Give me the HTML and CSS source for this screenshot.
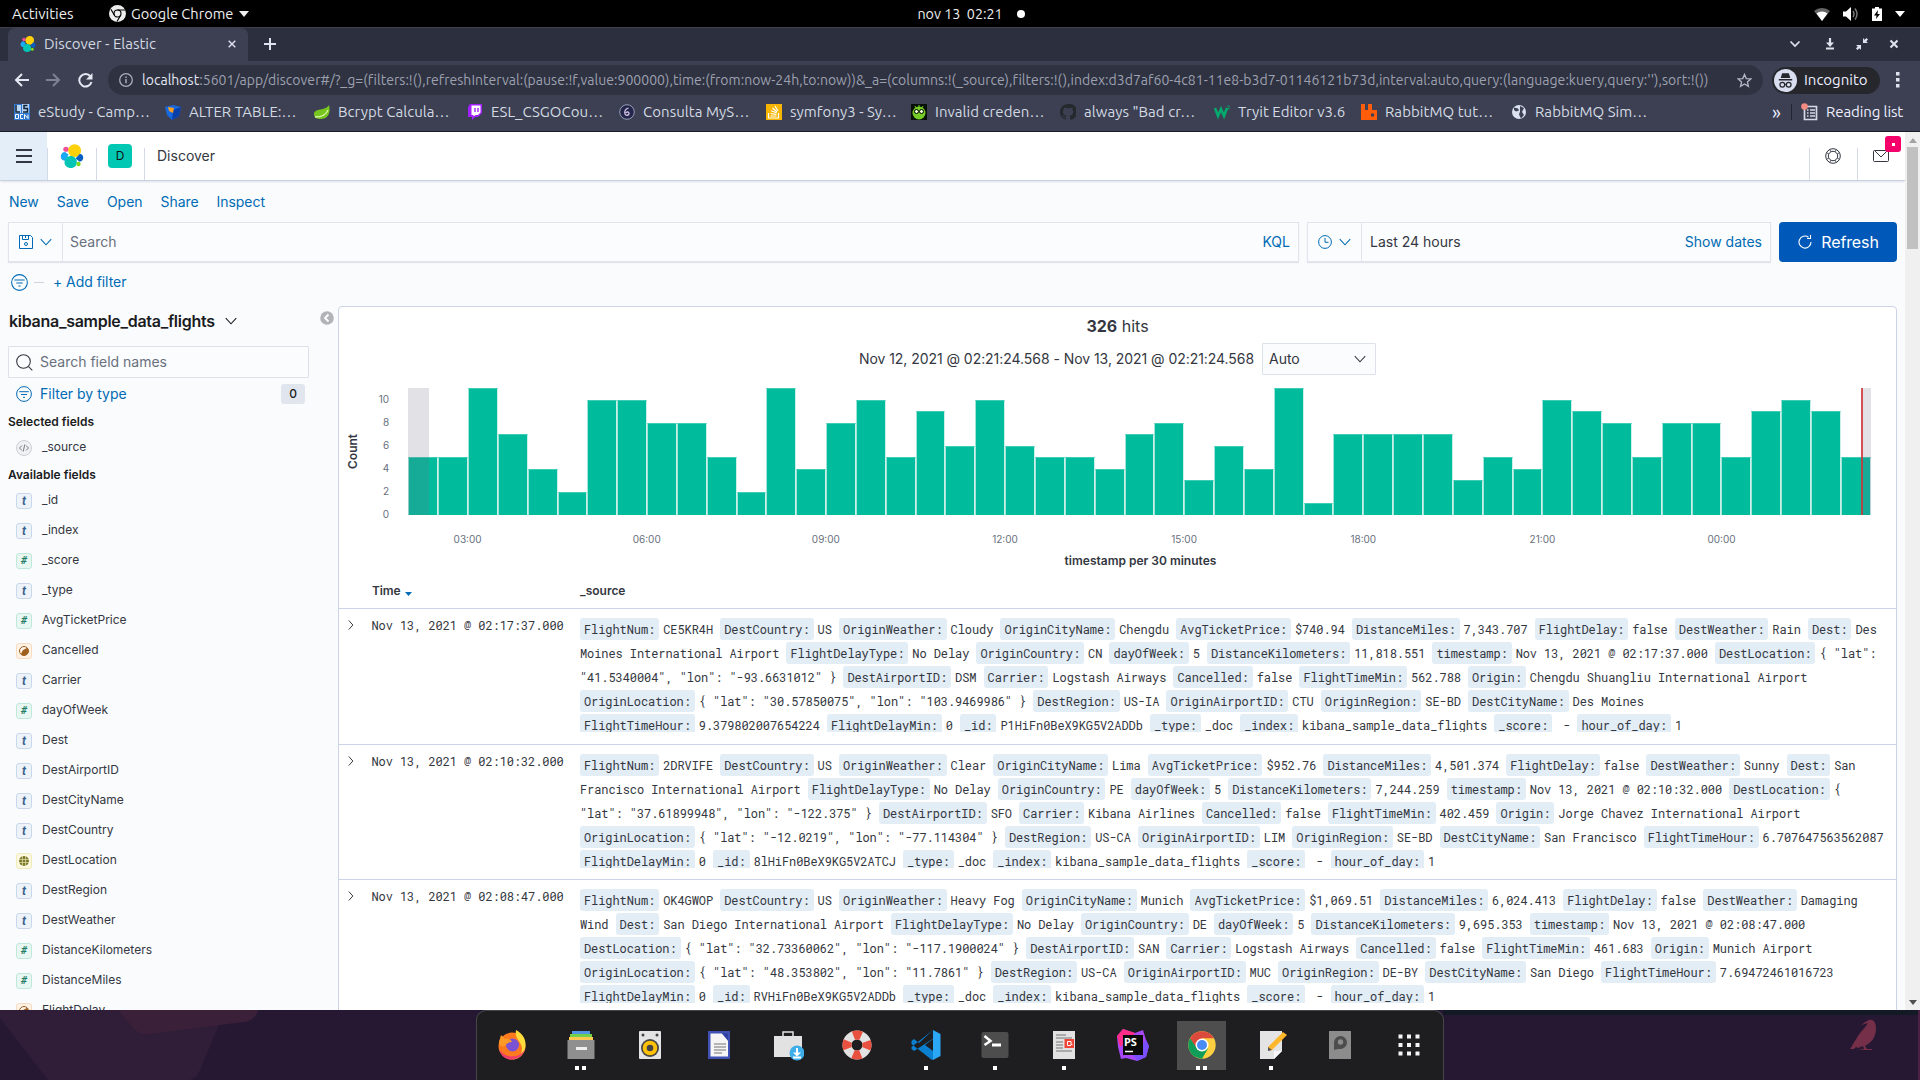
FILE: index.html
```html
<!DOCTYPE html>
<html lang="en">
<head>
<meta charset="utf-8">
<title>Discover - Elastic</title>
<link rel="stylesheet" href="styles.css">
</head>
<body>
<svg class="defs" aria-hidden="true">
  <symbol id="elastic" viewBox="0 0 32 32">
    <ellipse cx="8" cy="7" rx="3.6" ry="3.4" fill="#f04e98"/>
    <ellipse cx="19.5" cy="8.8" rx="8.6" ry="8.6" fill="#fed10a"/>
    <path d="M1 17c0-3.600 2.500-6.300 5.800-6.300l4.500 3.300-3.500 8.500C3.600 22.500 1 20.600 1 17z" fill="#1ba9f5"/>
    <path d="M31 18.300c0 3-2.200 5-4.800 5.400l-5.500-4.500 5.800-6.200c2.700.3 4.500 2.500 4.500 5.300z" fill="#0a5fc4"/>
    <path d="M6 25c0-5 3.500-9 8-9 5 0 8.500 3.600 8.500 8.300 0 4.500-3.500 7.700-8 7.700S6 29 6 25z" fill="#02c5b5"/>
    <ellipse cx="24.700" cy="26.500" rx="2.900" ry="3" fill="#7ddb1d"/>
  </symbol>
  <symbol id="chevd" viewBox="0 0 16 16"><path d="M2 4.800l6 6.400 6-6.400" fill="none" stroke="currentColor" stroke-width="1.200"/></symbol>
  <symbol id="chevr" viewBox="0 0 16 16"><path d="M5 2l5.500 6L5 14" fill="none" stroke="currentColor" stroke-width="1.300"/></symbol>
  <symbol id="filter" viewBox="0 0 16 16"><g fill="none" stroke="currentColor"><circle cx="8" cy="8" r="7.400"/><path d="M3.200 5.700h9.600M5 8.500h6M7 11.300h2"/></g></symbol>
  <symbol id="bool" viewBox="0 0 16 16"><circle cx="8" cy="8" r="4.500" fill="none" stroke="#a05f1e"/><path d="M11.200 4.800a4.500 4.500 0 0 1-6.400 6.400l2-4z" fill="#a05f1e"/></symbol>
</svg>

<header class="topbar">
  <div class="top-left">
    <span class="t-act">Activities</span>
    <svg width="17" height="17" viewBox="0 0 16 16"><circle cx="8" cy="8" r="8" fill="#eee"/><circle cx="8" cy="8" r="3.300" fill="#eee" stroke="#000" stroke-width="1.100"/><path d="M8 4.700h7M5.100 9.700L1.800 4M10.900 9.700L7.600 15.500" stroke="#000" stroke-width="1.100"/></svg>
    <span class="t-app">Google Chrome</span>
    <svg width="10" height="6"><path d="M0 0h10L5 6z" fill="#eee"/></svg>
  </div>
  <div class="top-mid"><span>nov 13&nbsp; 02:21</span><i></i></div>
  <div class="top-right">
    <svg width="16" height="14" viewBox="0 0 16 14"><path d="M0 4a12 12 0 0 1 16 0L8 14z" fill="#666"/><path d="M2.500 6.600a8.500 8.500 0 0 1 11 0L8 14z" fill="#fff"/></svg>
    <svg width="16" height="14" viewBox="0 0 16 14"><path d="M0 4.500h3L8 0v14L3 9.500H0z" fill="#fff"/><path d="M10 4q2 3 0 6M12 1.500q4 5.500 0 11" stroke="#777" stroke-width="1.500" fill="none"/></svg>
    <svg width="10" height="14" viewBox="0 0 10 14"><path d="M3 0h4v1.500h3V14H0V1.500h3z" fill="#fff"/><path d="M6 3L2 8.500h2.500L4 12l4-5H5.500z" fill="#000"/></svg>
    <svg width="10" height="6"><path d="M0 0h10L5 6z" fill="#fff"/></svg>
  </div>
</header>

<div class="tabstrip">
  <div class="tab">
    <svg width="16" height="16"><use href="#elastic"/></svg>
    <span>Discover - Elastic</span>
    <svg class="tab-x" width="8" height="8" viewBox="0 0 8 8"><path d="M.7.7l6.600 6.600M7.300.7L.7 7.300" stroke="#dde" stroke-width="1.500"/></svg>
  </div>
  <svg class="plus" width="12" height="12"><path d="M6 0v12M0 6h12" stroke="#dfe3ee" stroke-width="2"/></svg>
  <div class="winbtns">
    <svg width="12" height="12" viewBox="0 0 12 12"><path d="M1.500 3.500L6 8l4.500-4.500" fill="none" stroke="#dfe3ee" stroke-width="1.700"/></svg>
    <svg width="12" height="12" viewBox="0 0 12 12"><path d="M6 0v6" stroke="#dfe3ee" stroke-width="2.200"/><path d="M2 4.500h8L6 9zM2 9.500h8V11.500H2z" fill="#dfe3ee"/></svg>
    <svg width="12" height="12" viewBox="0 0 12 12"><path d="M7 0v5h5L10.300 3.500 12 1.500 10.500 0 8.500 1.700zM0 7h5v5L3.500 10.300 1.500 12 0 10.500l1.700-2z" fill="#dfe3ee"/></svg>
    <svg width="12" height="12" viewBox="0 0 12 12"><path d="M2.500 2.500l7 7M9.500 2.500l-7 7" stroke="#dfe3ee" stroke-width="2.100"/></svg>
  </div>
</div>

<div class="toolbar">
  <svg width="15" height="14" viewBox="0 0 15 14"><path d="M15 7H2M8 1L2 7l6 6" fill="none" stroke="#e4e8f2" stroke-width="2"/></svg>
  <svg width="15" height="14" viewBox="0 0 15 14"><path d="M0 7h13M7 1l6 6-6 6" fill="none" stroke="#7d8294" stroke-width="2"/></svg>
  <svg width="15" height="15" viewBox="0 0 15 15"><path d="M12.500 3.600A6.200 6.200 0 1 0 13.500 9" fill="none" stroke="#e4e8f2" stroke-width="2"/><path d="M14.500 0v6.500H8z" fill="#e4e8f2"/></svg>
  <div class="omni">
    <svg width="14" height="14" viewBox="0 0 14 14"><circle cx="7" cy="7" r="6.300" fill="none" stroke="#a9adba" stroke-width="1.300"/><path d="M7 6v4.300M7 3.500V5" stroke="#a9adba" stroke-width="1.500"/></svg>
    <span class="url"><b>localhost</b>:5601/app/discover#/?_g=(filters:!(),refreshInterval:(pause:!f,value:900000),time:(from:now-24h,to:now))&amp;_a=(columns:!(_source),filters:!(),index:d3d7af60-4c81-11e8-b3d7-01146121b73d,interval:auto,query:(language:kuery,query:''),sort:!())</span>
    <svg class="star" width="15" height="15" viewBox="0 0 16 16"><path d="M8 1.500l1.900 4.400 4.800.4-3.600 3.200 1.100 4.700L8 11.700l-4.200 2.500 1.100-4.700L1.300 6.300l4.800-.4z" fill="none" stroke="#b4b8c6" stroke-width="1.400"/></svg>
  </div>
  <div class="incog">
    <svg width="23" height="23" viewBox="0 0 24 24"><circle cx="12" cy="12" r="12" fill="#d9def0"/><path d="M8.500 4.500h7l1.500 5H7zM5 10.500h14V12H5z" fill="#25272c"/><circle cx="8.700" cy="16.500" r="2.500" fill="none" stroke="#25272c" stroke-width="1.300"/><circle cx="15.300" cy="16.500" r="2.500" fill="none" stroke="#25272c" stroke-width="1.300"/><path d="M11 16h2" stroke="#25272c"/></svg>
    <span>Incognito</span>
  </div>
  <svg class="dots" width="4" height="16"><path d="M0 0h3.500v3.500H0zM0 6h3.500v3.500H0zM0 12h3.500v3.500H0z" fill="#dfe3ee"/></svg>
</div>

<div class="bookmarks">
  <div class="bm"><svg viewBox="0 0 16 16"><path d="M0 0h16v16H0z" fill="#2f78d0"/><path d="M1 1h6v8H1zM8 0h7v9H8z" fill="#b8d5f7"/><path d="M2 1v7h4M13.500 1.500H10v3h3.500v3.500H9" stroke="#123" stroke-width="1.500" fill="none"/><path d="M1.500 10.500v4h3v-4zM9 10.500H6.500v4H9M10.500 15v-4.500l3.500 4v-4" stroke="#fff" fill="none"/></svg><span>eStudy - Camp…</span></div>
  <div class="bm"><svg viewBox="0 0 16 16"><path d="M0 3l8-2 8 2-2 9-7 4-5-5z" fill="#1769e0"/><path d="M8 6l8-3-2 9-7 4z" fill="#0a3fa8"/><path d="M3 3l6 1-1 5-4-2z" fill="#ff9d1c"/></svg><span>ALTER TABLE:…</span></div>
  <div class="bm"><svg viewBox="0 0 16 16"><path d="M15 1c2 8-1 14-8 14-4 0-7-1-7-5 0-6 12-3 15-9z" fill="#77c51f"/><path d="M1 13c6 0 11-2 13-7" stroke="#d9f5a5" stroke-width="1.300" fill="none"/></svg><span>Bcrypt Calcula…</span></div>
  <div class="bm"><svg viewBox="0 0 16 16"><path d="M3 0h12v9l-4 4H8l-3 3v-3H1V3z" fill="#a020f8"/><path d="M4.500 1.500h9v7L11 11H8.500L6.500 12.500V11h-2z" fill="#fff"/><path d="M8 4v4M11 4v4" stroke="#a020f8" stroke-width="1.400"/></svg><span>ESL_CSGOCou…</span></div>
  <div class="bm"><svg viewBox="0 0 16 16"><circle cx="8" cy="8" r="7.300" fill="#23264a" stroke="#999db4"/><path d="M9.500 4C6 5 5.500 8 6 10c1 2 4 1.500 4-.5S8 7.500 7 9" fill="none" stroke="#dce" stroke-width="1.300"/></svg><span>Consulta MyS…</span></div>
  <div class="bm"><svg viewBox="0 0 16 16"><path d="M0 0h16v16H0z" fill="#f7b500"/><path d="M2.500 9v5h10V9M4.500 12h6M4.500 9.500l6 .8M5 6.700l5.700 2M6.500 4l4.500 3.800M9 2l3 5" stroke="#fff" fill="none" stroke-width="1.200"/></svg><span>symfony3 - Sy…</span></div>
  <div class="bm"><svg viewBox="0 0 16 16"><path d="M0 0h16v16H0z" fill="#071004"/><circle cx="8" cy="9" r="6.500" fill="#76cc27"/><path d="M4 2l1 2M8 1v3M12 2l-1 2" stroke="#76cc27"/><circle cx="5.500" cy="7.500" r="2" fill="#eaffd0" stroke="#000"/><circle cx="10.500" cy="7.500" r="2" fill="#eaffd0" stroke="#000"/></svg><span>Invalid creden…</span></div>
  <div class="bm"><svg viewBox="0 0 16 16"><path d="M8 0C3.600 0 0 3.600 0 8c0 3.500 2.300 6.500 5.500 7.600.4.100.5-.2.500-.4v-1.400c-2.200.5-2.700-1-2.700-1-.8-1.400-1.500-1.600-.9-1.600.9.100 1.600 1 1.600 1 .6 1 1.700.9 2.100.7 0-.6.300-1 .5-1.200-1.800-.2-3.600-.9-3.600-4 0-.9.300-1.600.8-2.100 0-.3-.4-1.100.1-2.200l2.200.8a7.600 7.600 0 0 1 4 0l2.200-.8c.4 1.100.1 1.900.1 2.200.5.600.8 1.200.8 2.100 0 3.100-1.900 3.800-3.700 4 .3.300.6.700.6 1.500v2.200c0 .2.100.5.600.4A8 8 0 0 0 8 0z" fill="#25292e"/></svg><span>always "Bad cr…</span></div>
  <div class="bm"><svg viewBox="0 0 16 16"><path d="M1 4l3 8 3-7 3 7 3-8" fill="none" stroke="#04aa6d" stroke-width="2.600"/><path d="M13 2h2.500l-1 1.500 1 1.500H13" stroke="#04aa6d" fill="none" stroke-width=".8"/></svg><span>Tryit Editor v3.6</span></div>
  <div class="bm"><svg viewBox="0 0 16 16"><path d="M0 0h4v6h3V0h4v6h5v10H0z" fill="#ff5d0a"/><circle cx="11.500" cy="11" r="1.800" fill="#3c4052"/></svg><span>RabbitMQ tut…</span></div>
  <div class="bm"><svg viewBox="0 0 16 16"><circle cx="8" cy="8" r="7" fill="#dce1f0"/><path d="M3 3.500l4 1 1 2-3 1-2-1.500zM9 2l4 2-2 4 2 3-3 3.500-2-4 1-3z" fill="#3c4052"/></svg><span>RabbitMQ Sim…</span></div>
  <div class="bm-end">
    <b>»</b><i></i>
    <svg width="18" height="18" viewBox="0 0 18 18"><path d="M3.500 4v12.500h12V3.500H6" fill="none" stroke="#d5d9e6" stroke-width="1.700"/><path d="M6 7h1.500M9 7h5M6 10h1.500M9 10h5M6 13h1.500M9 13h5" stroke="#d5d9e6" stroke-width="1.500"/><circle cx="3.500" cy="3.500" r="3.300" fill="#f28b82"/></svg>
    <span>Reading list</span>
  </div>
</div>

<div class="viewport">
<div class="page">
  <div class="khead">
    <div class="k-menu"><svg width="16" height="14"><path d="M0 1h16M0 7h16M0 13h16" stroke="#343741" stroke-width="2"/></svg></div>
    <div class="k-cell k-logo"><svg width="24" height="24"><use href="#elastic"/></svg></div>
    <div class="k-cell"><span class="space">D</span></div>
    <div class="k-crumb">Discover</div>
    <div class="k-cell k-help"><svg width="16" height="16" viewBox="0 0 16 16" fill="none" stroke="#343741"><circle cx="8" cy="8" r="7.300"/><circle cx="8" cy="8" r="4.700"/><path d="M4.800 1.600l1.200 2.300M11.200 1.600L10 3.900M4.800 14.400l1.200-2.300M11.200 14.400L10 12.100M1.600 4.800L3.900 6M1.600 11.200L3.900 10M14.400 4.800L12.100 6M14.400 11.200L12.100 10" stroke-width=".8"/></svg></div>
    <div class="k-cell k-mail"><svg width="16" height="12" viewBox="0 0 16 12" fill="none" stroke="#343741"><rect x=".5" y=".5" width="15" height="11" rx="1"/><path d="M2 1l6 6 6-6"/></svg><em><u></u></em></div>
  </div>
  <nav class="kmenu"><a>New</a><a>Save</a><a>Open</a><a>Share</a><a>Inspect</a></nav>
  <div class="qbar">
    <div class="box q-search">
      <div class="q-btn"><svg width="14" height="14" viewBox="0 0 14 14" fill="none" stroke="currentColor"><path d="M.5.5h11l2 2v11H.5zM3.500.5v4h6v-4M6.500 1v2"/><circle cx="7" cy="9" r="1.500"/></svg><svg width="14" height="14"><use href="#chevd"/></svg></div>
      <span class="ph">Search</span><a>KQL</a>
    </div>
    <div class="box q-time">
      <div class="q-btn"><svg width="14" height="14" viewBox="0 0 14 14" fill="none" stroke="currentColor"><circle cx="7" cy="7" r="6.400"/><path d="M7 3v4.300h3.500"/></svg><svg width="14" height="14"><use href="#chevd"/></svg></div>
      <span>Last 24 hours</span><a>Show dates</a>
    </div>
    <div class="refresh"><svg width="14" height="14" viewBox="0 0 14 14" fill="none" stroke="#fff" stroke-width="1.100"><path d="M10.500 2.200A6 6 0 1 0 13 7M9 3.500h3.500V0"/></svg><span>Refresh</span></div>
  </div>
  <div class="frow"><svg width="17" height="17"><use href="#filter"/></svg><i></i><a>+ Add filter</a></div>

  <div class="main">
    <aside class="side">
      <div class="s-title"><b>kibana_sample_data_flights</b><svg width="14" height="14"><use href="#chevd"/></svg>
        <svg class="s-col" width="14" height="14" viewBox="0 0 14 14"><circle cx="7" cy="7" r="6.800" fill="#b2b3b7"/><path d="M8.500 3.500L5 7l3.500 3.500" fill="none" stroke="#fff" stroke-width="1.800"/></svg></div>
      <div class="s-search"><svg width="17" height="17" viewBox="0 0 17 17" fill="none" stroke="#343741" stroke-width="1.100"><circle cx="7.500" cy="7.500" r="6.800"/><path d="M12.300 12.300l4 4"/></svg><span>Search field names</span></div>
      <div class="s-type"><svg width="16" height="16"><use href="#filter"/></svg><a>Filter by type</a><em>0</em></div>
      <h4>Selected fields</h4>
      <div class="f sel"><i class="src"><svg width="16" height="16" viewBox="0 0 16 16"><path d="M6 5.500L3.500 8 6 10.500M10 5.500L12.500 8 10 10.500M8.800 4.500l-1.600 7" fill="none" stroke="#777a80"/></svg></i>_source</div>
      <h4 class="av">Available fields</h4>
      <div class="f"><i class="t">t</i>_id</div>
      <div class="f"><i class="t">t</i>_index</div>
      <div class="f"><i class="n">#</i>_score</div>
      <div class="f"><i class="t">t</i>_type</div>
      <div class="f"><i class="n">#</i>AvgTicketPrice</div>
      <div class="f"><i class="b"><svg width="16" height="16"><use href="#bool"/></svg></i>Cancelled</div>
      <div class="f"><i class="t">t</i>Carrier</div>
      <div class="f"><i class="n">#</i>dayOfWeek</div>
      <div class="f"><i class="t">t</i>Dest</div>
      <div class="f"><i class="t">t</i>DestAirportID</div>
      <div class="f"><i class="t">t</i>DestCityName</div>
      <div class="f"><i class="t">t</i>DestCountry</div>
      <div class="f"><i class="g"><svg width="16" height="16" viewBox="0 0 16 16"><circle cx="8" cy="8" r="5" fill="#7e7a2c"/><path d="M3 6.500h10M3 9.500h10M6.500 3v10M9.500 3v10" stroke="#f3f0c8" stroke-width=".6"/></svg></i>DestLocation</div>
      <div class="f"><i class="t">t</i>DestRegion</div>
      <div class="f"><i class="t">t</i>DestWeather</div>
      <div class="f"><i class="n">#</i>DistanceKilometers</div>
      <div class="f"><i class="n">#</i>DistanceMiles</div>
      <div class="f"><i class="b"><svg width="16" height="16"><use href="#bool"/></svg></i>FlightDelay</div>
    </aside>

    <section class="panel">
      <div class="hits"><b>326</b> hits</div>
      <div class="range"><span>Nov 12, 2021 @ 02:21:24.568 - Nov 13, 2021 @ 02:21:24.568</span><div class="select">Auto<svg width="14" height="14"><use href="#chevd"/></svg></div></div>
      <div class="chart">
        <div class="ytitle">Count</div>
        <div class="yaxis"><span>10</span><span>8</span><span>6</span><span>4</span><span>2</span><span>0</span></div>
        <div class="plot">
          <i style="--v:5"></i><i style="--v:5"></i><i style="--v:11"></i><i style="--v:7"></i><i style="--v:4"></i><i style="--v:2"></i><i style="--v:10"></i><i style="--v:10"></i><i style="--v:8"></i><i style="--v:8"></i><i style="--v:5"></i><i style="--v:2"></i><i style="--v:11"></i><i style="--v:4"></i><i style="--v:8"></i><i style="--v:10"></i><i style="--v:5"></i><i style="--v:9"></i><i style="--v:6"></i><i style="--v:10"></i><i style="--v:6"></i><i style="--v:5"></i><i style="--v:5"></i><i style="--v:4"></i><i style="--v:7"></i><i style="--v:8"></i><i style="--v:3"></i><i style="--v:6"></i><i style="--v:4"></i><i style="--v:11"></i><i style="--v:1"></i><i style="--v:7"></i><i style="--v:7"></i><i style="--v:7"></i><i style="--v:7"></i><i style="--v:3"></i><i style="--v:5"></i><i style="--v:4"></i><i style="--v:10"></i><i style="--v:9"></i><i style="--v:8"></i><i style="--v:5"></i><i style="--v:8"></i><i style="--v:8"></i><i style="--v:5"></i><i style="--v:9"></i><i style="--v:10"></i><i style="--v:9"></i><i style="--v:5"></i>
          <s class="shade-l"></s><s class="shade-r"></s>
        </div>
      </div>
      <div class="xaxis"><span>03:00</span><span>06:00</span><span>09:00</span><span>12:00</span><span>15:00</span><span>18:00</span><span>21:00</span><span>00:00</span></div>
      <div class="xtitle">timestamp per 30 minutes</div>
      <div class="thead"><span class="c-time">Time <svg width="7" height="4"><path d="M0 0h7L3.500 4z" fill="#006bb4"/></svg></span><span>_source</span></div>
      <div class="row"><svg class="exp" width="12" height="12"><use href="#chevr"/></svg><time>Nov 13, 2021 @ 02:17:37.000</time>
        <p><q>FlightNum:</q>CE5KR4H <q>DestCountry:</q>US <q>OriginWeather:</q>Cloudy <q>OriginCityName:</q>Chengdu <q>AvgTicketPrice:</q>$740.94 <q>DistanceMiles:</q>7,343.707 <q>FlightDelay:</q>false <q>DestWeather:</q>Rain <q>Dest:</q>Des<br>Moines International Airport <q>FlightDelayType:</q>No Delay <q>OriginCountry:</q>CN <q>dayOfWeek:</q>5 <q>DistanceKilometers:</q>11,818.551 <q>timestamp:</q>Nov 13, 2021 @ 02:17:37.000 <q>DestLocation:</q>{ "lat":<br>"41.5340004", "lon": "-93.6631012" } <q>DestAirportID:</q>DSM <q>Carrier:</q>Logstash Airways <q>Cancelled:</q>false <q>FlightTimeMin:</q>562.788 <q>Origin:</q>Chengdu Shuangliu International Airport<br><q>OriginLocation:</q>{ "lat": "30.57850075", "lon": "103.9469986" } <q>DestRegion:</q>US-IA <q>OriginAirportID:</q>CTU <q>OriginRegion:</q>SE-BD <q>DestCityName:</q>Des Moines<br><q>FlightTimeHour:</q>9.379802007654224 <q>FlightDelayMin:</q>0 <q>_id:</q>P1HiFn0BeX9KG5V2ADDb <q>_type:</q>_doc <q>_index:</q>kibana_sample_data_flights <q>_score:</q>&nbsp;- <q>hour_of_day:</q>1</p></div>
      <div class="row"><svg class="exp" width="12" height="12"><use href="#chevr"/></svg><time>Nov 13, 2021 @ 02:10:32.000</time>
        <p><q>FlightNum:</q>2DRVIFE <q>DestCountry:</q>US <q>OriginWeather:</q>Clear <q>OriginCityName:</q>Lima <q>AvgTicketPrice:</q>$952.76 <q>DistanceMiles:</q>4,501.374 <q>FlightDelay:</q>false <q>DestWeather:</q>Sunny <q>Dest:</q>San<br>Francisco International Airport <q>FlightDelayType:</q>No Delay <q>OriginCountry:</q>PE <q>dayOfWeek:</q>5 <q>DistanceKilometers:</q>7,244.259 <q>timestamp:</q>Nov 13, 2021 @ 02:10:32.000 <q>DestLocation:</q>{<br>"lat": "37.61899948", "lon": "-122.375" } <q>DestAirportID:</q>SFO <q>Carrier:</q>Kibana Airlines <q>Cancelled:</q>false <q>FlightTimeMin:</q>402.459 <q>Origin:</q>Jorge Chavez International Airport<br><q>OriginLocation:</q>{ "lat": "-12.0219", "lon": "-77.114304" } <q>DestRegion:</q>US-CA <q>OriginAirportID:</q>LIM <q>OriginRegion:</q>SE-BD <q>DestCityName:</q>San Francisco <q>FlightTimeHour:</q>6.707647563562087<br><q>FlightDelayMin:</q>0 <q>_id:</q>8lHiFn0BeX9KG5V2ATCJ <q>_type:</q>_doc <q>_index:</q>kibana_sample_data_flights <q>_score:</q>&nbsp;- <q>hour_of_day:</q>1</p></div>
      <div class="row"><svg class="exp" width="12" height="12"><use href="#chevr"/></svg><time>Nov 13, 2021 @ 02:08:47.000</time>
        <p><q>FlightNum:</q>OK4GWOP <q>DestCountry:</q>US <q>OriginWeather:</q>Heavy Fog <q>OriginCityName:</q>Munich <q>AvgTicketPrice:</q>$1,069.51 <q>DistanceMiles:</q>6,024.413 <q>FlightDelay:</q>false <q>DestWeather:</q>Damaging<br>Wind <q>Dest:</q>San Diego International Airport <q>FlightDelayType:</q>No Delay <q>OriginCountry:</q>DE <q>dayOfWeek:</q>5 <q>DistanceKilometers:</q>9,695.353 <q>timestamp:</q>Nov 13, 2021 @ 02:08:47.000<br><q>DestLocation:</q>{ "lat": "32.73360062", "lon": "-117.1900024" } <q>DestAirportID:</q>SAN <q>Carrier:</q>Logstash Airways <q>Cancelled:</q>false <q>FlightTimeMin:</q>461.683 <q>Origin:</q>Munich Airport<br><q>OriginLocation:</q>{ "lat": "48.353802", "lon": "11.7861" } <q>DestRegion:</q>US-CA <q>OriginAirportID:</q>MUC <q>OriginRegion:</q>DE-BY <q>DestCityName:</q>San Diego <q>FlightTimeHour:</q>7.69472461016723<br><q>FlightDelayMin:</q>0 <q>_id:</q>RVHiFn0BeX9KG5V2ADDb <q>_type:</q>_doc <q>_index:</q>kibana_sample_data_flights <q>_score:</q>&nbsp;- <q>hour_of_day:</q>1</p></div>
    </section>
  </div>
</div>
<div class="scroll">
  <svg width="8" height="5"><path d="M0 5h8L4 0z" fill="#a3a3a3"/></svg>
  <i></i>
  <svg width="8" height="5"><path d="M0 0h8L4 5z" fill="#505050"/></svg>
</div>
</div>

<footer class="desk">
  <svg class="wall" width="1920" height="70" viewBox="0 0 1920 70">
    <path d="M0 0h225L200 60q-4 10-12 10H48L0 8z" fill="#301d37"/>
    <path d="M118 0h140q-2 10-14 12l-96 12q-8 1-14-5z" fill="#3a2038"/>
    <path d="M1443 0h477v5h-477z" fill="#131a26"/>
    <path d="M1918 0h2v70h-2z" fill="#4a2045"/>
    <path d="M1850 39l8-13c3-5 8-9 10-13l-7 2c3-2 5-4 8-5 4-1 7 2 7 8 0 9-4 14-11 18l2 3h5v1h-14l6-1-1-3-5 2-2-1-2 2z" fill="#752f49"/>
  </svg>
  <div class="dock">
    <div class="d"><svg viewBox="0 0 32 32"><circle cx="16" cy="17" r="13.500" fill="#ff7a1f"/><path d="M20 1c7 4 10 9 9.500 16-1 9-7 13-13 13.500 8-3 11-8 9-14-2-5-7-8-5.500-15.500z" fill="#ffdc3c"/><path d="M3 20c2 9 10 12 16 10 5-1 9-5 10-10-4 7-10 8-16 7-5-1-8-4-10-7z" fill="#f0406a"/><circle cx="16.500" cy="16" r="6.500" fill="#7b52d3"/><path d="M5 6l4 4c3-1 6 0 7 3-3 0-5 1-7 4-4 1-6-1-6-4z" fill="#ff9a26"/></svg></div>
    <div class="d"><svg viewBox="0 0 32 32"><path d="M7 2h18v4H7z" fill="#5294e2"/><path d="M5 5h22v4H5z" fill="#72d14b"/><path d="M4 8h24v4H4z" fill="#ffc850"/><path d="M2.500 11h27v19h-27z" fill="#8f8f8f"/><path d="M11 18h11v3H11z" fill="#eee"/></svg><s></s><s></s></div>
    <div class="d"><svg viewBox="0 0 32 32"><rect x="5" y="2" width="22" height="28" rx="1" fill="#e4e4e4"/><circle cx="9" cy="6" r="1.500" fill="#444"/><circle cx="23" cy="6" r="1.500" fill="#444"/><circle cx="16" cy="19" r="9" fill="#444"/><circle cx="16" cy="19" r="5.300" fill="#444" stroke="#ffc107" stroke-width="4"/></svg></div>
    <div class="d"><svg viewBox="0 0 32 32"><path d="M5 2h22v28H5z" fill="#3f51b5"/><path d="M7.500 4.500H19l6 7v16H7.500z" fill="#f5f5f5"/><path d="M19 4.500h6v7z" fill="#3040a0"/><path d="M11 15h12M11 18h12M11 21h12M11 24h8" stroke="#777" stroke-width="1.200"/></svg></div>
    <div class="d"><svg viewBox="0 0 32 32"><path d="M11 7V3h10v4" fill="none" stroke="#e4e4e4" stroke-width="1.500"/><path d="M2 7h28v21H2z" fill="#e2e2e2"/><circle cx="25" cy="24" r="7.500" fill="#3daee9"/><path d="M25 19v6M21 28.500h8" stroke="#fff" stroke-width="2"/><path d="M21 23.500h8l-4 4z" fill="#fff"/></svg></div>
    <div class="d"><svg viewBox="0 0 32 32"><circle cx="16" cy="16" r="10" fill="none" stroke="#e2e2e2" stroke-width="9"/><circle cx="16" cy="16" r="10" fill="none" stroke="#e8503f" stroke-width="9" stroke-dasharray="7.854" stroke-dashoffset="3.927"/></svg></div>
    <div class="d"><svg viewBox="0 0 32 32"><path d="M23 1L9 14 4 10 1.500 12v3L22 31l2-1V9L4 22l-2.500-2v-2z" fill="#0b7fd0"/><path d="M23 1l7.500 4v22L23 31z" fill="#2aa8f5"/><path d="M23 10L15 16l8 6z" fill="#1e1e20"/></svg><s></s></div>
    <div class="d"><svg viewBox="0 0 32 32"><rect x="2.500" y="3" width="27" height="26" rx="2" fill="#4d4d4d"/><path d="M5.500 7l6 5-6 4" fill="none" stroke="#fff" stroke-width="2.500"/><path d="M13 16h9" stroke="#fff" stroke-width="3"/></svg><s></s></div>
    <div class="d"><svg viewBox="0 0 32 32"><path d="M5 2h22v28H5z" fill="#e2e2e2"/><path d="M8 6h10M8 9h16M8 13h7M8 16h7M8 19h7M8 22h16" stroke="#999" stroke-width="1.500"/><path d="M16.500 10H26v9h-9.500z" fill="#f04438"/><path d="M23 16.500h-3.500v-4H23v3h1.500" stroke="#fff" fill="none"/></svg><s></s></div>
    <div class="d ps"><svg viewBox="0 0 32 32"><path d="M0 7l6-7 12 4 8-3 3 10 3 6-3 11-9 4-11-3-5 1-3-12z" fill="#a847f5"/><path d="M0 7l6-7 12 4-5 6-10 8z" fill="#ff2d87"/><path d="M29 11l3 6-3 11-9 4-4-6z" fill="#7a4fff"/><path d="M6 6h20v20H6z" fill="#0a0a0a"/><path d="M8 22.500h8" stroke="#fff" stroke-width="1.500"/></svg><b>PS</b></div>
    <div class="d on"><svg viewBox="0 0 32 32"><circle cx="16" cy="16" r="13.700" fill="#fdd041"/><path d="M4.100 9.200A13.700 13.700 0 0 1 27.900 9.300H16L9.800 19.500z" fill="#dc4a3c"/><path d="M4.100 9.200A13.700 13.700 0 0 0 16 29.700L22 19.500 12 21z" fill="#109d58"/><circle cx="16" cy="16" r="6.500" fill="#fff"/><circle cx="16" cy="16" r="5" fill="#4a8cf5"/></svg><s></s><s></s></div>
    <div class="d"><svg viewBox="0 0 32 32"><path d="M5 2h22v20l-8 8H5z" fill="#e4e4e4"/><path d="M19 30v-8h8z" fill="#fafafa"/><path d="M13 18L28 3l4 3-15 15-4 1z" fill="#fdb72b"/><path d="M13 18l4 3-4 1z" fill="#555"/></svg><s></s></div>
    <div class="d"><svg viewBox="0 0 32 32"><path d="M5 2h22v28H5z" fill="#8c8c8c"/><path d="M10 21v-8a6.500 6.500 0 1 1 7 7h-3z" fill="#4d4d4d"/><circle cx="16.500" cy="13" r="2.700" fill="#8c8c8c"/></svg></div>
    <div class="d"><svg viewBox="0 0 32 32"><path d="M5.500 5.500h4v4h-4zM14 5.500h4v4h-4zM22.500 5.500h4v4h-4zM5.500 14h4v4h-4zM14 14h4v4h-4zM22.500 14h4v4h-4zM5.500 22.500h4v4h-4zM14 22.500h4v4h-4zM22.500 22.500h4v4h-4z" fill="#f5f5f5"/></svg></div>
  </div>
</footer>
</body>
</html>
```
FILE: styles.css
```css
* { box-sizing: border-box; }
body { margin: 0; width: 1920px; height: 1080px; overflow: hidden; background: #261833; display: flex; flex-direction: column; font: 15px/20px Ubuntu, "Noto Sans", sans-serif; color: #d3dae3; }
svg { display: block; flex: none; }
i, em { font-style: normal; }
s, u { text-decoration: none; }
.defs { position: absolute; width: 0; height: 0; }

.topbar { height: 27px; background: #000; color: #eee; display: grid; grid-template-columns: 1fr auto 1fr; align-items: center; font-size: 14.6px; }
.top-left { display: flex; align-items: center; padding-left: 12px; }
.t-act { width: 97px; font-size: 15px; }
.t-app { margin: 0 6px 0 5px; }
.top-mid { display: flex; align-items: center; gap: 14px; padding-left: 22px; font-size: 14.3px; }
.top-mid i { width: 8px; height: 8px; border-radius: 50%; background: #fff; }
.top-right { display: flex; align-items: center; justify-content: flex-end; gap: 13px; padding-right: 15px; }

.tabstrip { height: 34px; background: #2c2f3d; border-top: 1px solid #3d3f4b; display: flex; align-items: center; padding-left: 8px; }
.tab { width: 240px; height: 33px; background: #3c4052; border-radius: 7px 7px 0 0; display: flex; align-items: center; padding: 0 12px 2px; gap: 8px; }
.tab-x { margin-left: auto; }
.plus { margin-left: 16px; margin-bottom: 2px; }
.winbtns { margin: 0 0 2px auto; display: flex; gap: 20px; padding-right: 20px; }
.winbtns svg:first-child { margin-right: 3px; }

.toolbar { height: 38px; background: #3c4052; display: flex; align-items: center; padding: 0 20px 0 14px; }
.toolbar > svg + svg { margin-left: 17px; }
.omni { margin-left: 15px; width: 1655px; height: 30px; border-radius: 15px; background: #2f3241; display: flex; align-items: center; padding: 0 11px 0 11px; color: #9da1b0; }
.url { margin-left: 9px; white-space: nowrap; font-size: 14px; letter-spacing: .029px; }
.url b { font-weight: 400; color: #e4e8f2; }
.star { margin-left: auto; }
.incog { margin-left: 9px; width: 108px; height: 27px; border-radius: 14px; background: #25272c; color: #eef; display: flex; align-items: center; gap: 7px; padding-left: 2px; }
.toolbar > .dots { margin-left: auto; }

.bookmarks { height: 33px; background: #3c4052; border-bottom: 1px solid #191b26; display: grid; grid-template-columns: 151px 149px 153px 152px 147px 145px 149px 154px 147px 150px 261px 1fr; align-items: center; padding: 0 13px 6px 14px; white-space: nowrap; }
.bm { display: flex; align-items: center; gap: 8px; letter-spacing: .05px; }
.bm svg { width: 16px; height: 16px; }
.bm-end { display: flex; align-items: center; color: #eef; }
.bm-end b { font-size: 19px; font-weight: 400; line-height: 16px; width: 11px; }
.bm-end i { width: 1px; height: 16px; background: #222532; margin: 0 9px 0 8px; }
.bm-end span { margin-left: 7px; letter-spacing: -.1px; }

.viewport { height: 878px; display: flex; background: #fafbfd; color: #343741; font: 14px/20px Inter, sans-serif; overflow: hidden; }
.page { width: 1905px; }
.viewport a { color: #006bb4; }
.khead { height: 49px; background: #fff; border-bottom: 1px solid #c9d0e2; box-shadow: 0 2px 2px -1px rgba(152,162,179,.3); display: flex; align-items: stretch; position: relative; }
.k-menu { width: 47px; background: #e3eef8; display: flex; align-items: center; justify-content: center; }
.k-cell { width: 48px; display: flex; align-items: center; justify-content: center; background: linear-gradient(#d3dae6, #d3dae6) 0 16px / 1px 32px no-repeat; }
.k-logo { width: 49px; padding-left: 1px; }
.space { width: 24px; height: 24px; border-radius: 4px; background: #00c8b3; color: #111; font-size: 12px; line-height: 24px; text-align: center; margin-bottom: 1px; }
.k-crumb { flex: 1; padding-left: 13px; line-height: 48px; background: linear-gradient(#d3dae6, #d3dae6) 0 16px / 1px 32px no-repeat; }
.k-mail { position: relative; }
.k-mail em { position: absolute; right: 4px; top: 4px; width: 16px; height: 16px; border-radius: 3px; background: #f5006b; display: flex; align-items: center; justify-content: center; }
.k-mail u { width: 3px; height: 3px; background: #fff; }
.kmenu { height: 41px; display: flex; align-items: center; gap: 18px; padding: 0 9px; letter-spacing: -.05px; }
.qbar { height: 40px; display: flex; gap: 8px; padding: 0 8px; }
.box { border: 1px solid #e0e4ee; background: #fbfcfd; box-shadow: 0 1px 1px rgba(152,162,179,.25); display: flex; align-items: center; }
.box a { margin-left: auto; padding-right: 8px; }
.q-search { flex: 1; }
.q-time { width: 464px; }
.q-btn { width: 54px; align-self: stretch; border-right: 1px solid #e0e4ee; display: flex; align-items: center; gap: 6px; padding-left: 10px; color: #006bb4; margin-right: 7px; }
.q-time .q-btn { margin-right: 8px; }
.ph { color: #69707d; }
.refresh { width: 118px; border-radius: 4px; background: #0059b8; color: #fff; font-size: 16px; display: flex; align-items: center; justify-content: center; gap: 9px; padding: 0 0 1px 1px; letter-spacing: -.1px; }
.frow { height: 44px; display: flex; align-items: center; padding: 0 0 4px 11px; color: #006bb4; letter-spacing: -.05px; }
.frow i { width: 10px; height: 1px; background: #cdd3e0; margin: 0 9px 0 6px; }

.main { display: flex; height: 704px; }
.side { width: 338px; padding: 4px 4px 0 8px; font-size: 12px; }
.s-title { display: flex; align-items: center; height: 22px; font-size: 16px; color: #1a1c21; padding-left: 1px; }
.s-title b { font-weight: 600; margin-right: 9px; letter-spacing: -.28px; }
.s-col { margin: -6px 0 0 auto; }
.s-search { width: 301px; height: 32px; margin-top: 14px; border: 1px solid #dce1ec; background: #fbfcfd; display: flex; align-items: center; gap: 7px; padding-left: 7px; font-size: 14px; color: #69707d; border-radius: 1px; }
.s-type { width: 297px; height: 32px; display: flex; align-items: center; gap: 8px; padding-left: 8px; font-size: 14px; color: #006bb4; }
.s-type em { margin-left: auto; width: 24px; height: 20px; border-radius: 3px; background: #e0e5ee; font-size: 12px; font-weight: 500; text-align: center; color: #1a1c21; }
.side h4 { margin: 0; height: 22px; line-height: 24px; font-size: 12px; font-weight: 600; color: #1a1c21; }
.side h4.av { margin-top: -3px; }
.f { height: 30px; display: flex; align-items: center; padding-left: 8px; line-height: 16px; }
.f.sel { height: 34px; padding-bottom: 4px; }
.f i { width: 16px; height: 16px; margin: 2px 10px 0 0; border: 1px solid #c8d8ea; border-radius: 3px; background: #edf3f9; color: #39618f; font: italic 700 12px/14px Roboto, sans-serif; text-align: center; flex: none; }
.f i svg { margin: -1px; }
.f .n { border-color: #bfe8da; background: #e8f7f2; color: #1f7d66; font-size: 11px; }
.f .b { border-color: #f8dcc0; background: #fef2e6; }
.f .g { border-color: #f0ebb8; background: #fbf9e0; }
.f .src { border-radius: 50%; border-color: #ccced3; background: #f0f1f3; }

.panel { width: 1559px; height: 720px; background: #fff; border: 1px solid #cbd4e6; border-radius: 4px; }
.hits { height: 36px; padding-top: 9px; text-align: center; font-size: 16px; }
.range { height: 32px; display: flex; align-items: center; justify-content: center; gap: 8px; letter-spacing: -.05px; }
.select { width: 114px; height: 32px; border: 1px solid #dce1ec; border-radius: 1px; background: #fbfcfd; display: flex; align-items: center; justify-content: space-between; padding: 0 8px 0 6px; }
.chart { margin-top: 13px; height: 127px; display: flex; }
.ytitle { width: 28px; writing-mode: vertical-rl; transform: rotate(180deg); text-align: center; font-size: 12px; font-weight: 600; line-height: 28px; }
.yaxis { width: 22px; padding-top: 3px; display: flex; flex-direction: column; font-size: 10px; line-height: 16px; color: #69707d; text-align: right; letter-spacing: -.1px; }
.yaxis span { flex: none; height: 23.1px; }
.plot { position: relative; margin-left: 19.300px; width: 1462.500px; height: 127px; display: flex; align-items: flex-end; }
.plot i { flex: 1; height: calc(var(--v) * 11.545px); background: #00bc9d; border-left: 1px solid #9fe4d7; border-right: .5px solid #c9f1ea; border-top: 1px solid #40cdb5; }
.plot s { position: absolute; top: 0; bottom: 0; background: rgba(110,105,125,.2); }
.shade-l { left: 0; width: 21px; }
.plot .shade-r { right: 0; width: 10px; border-left: 2px solid rgba(204,50,58,.85); background-clip: padding-box; }
.xaxis { margin: 14px 0 0 39px; display: flex; font-size: 10px; color: #69707d; }
.xaxis span { width: 179.15px; text-align: center; flex: none; }
.xtitle { height: 20px; margin: 2px 0 0 46px; text-align: center; font-size: 12px; font-weight: 600; }
.thead { height: 38px; border-bottom: 1px solid #cbd4e6; display: flex; padding: 0 0 0 33px; font-size: 12px; font-weight: 600; line-height: 40px; }
.c-time { width: 208px; display: flex; align-items: flex-start; gap: 4px; letter-spacing: -.1px; }
.c-time svg { margin-top: 21px; }
.row { height: 135.5px; border-bottom: 1px solid #cbd4e6; padding-top: 8px; display: flex; font: 12px/16px "Roboto Mono", "Liberation Mono", monospace; letter-spacing: -.083px; }
.exp { margin: 2px 14.5px 0 6px; }
.row time { width: 208.5px; flex: none; }
.row p { margin: 0; height: 115px; overflow: hidden; line-height: 24px; white-space: nowrap; }
.row q { quotes: none; background: #e2edf6; border-radius: 3px; padding: 3px 4px; margin-right: 4px; }
.scroll { width: 15px; background: #f0f0f0; display: flex; flex-direction: column; align-items: center; padding: 6px 0 5px; }
.scroll i { width: 11px; height: 102px; margin: 4px 0 auto; background: #c1c1c1; }

.desk { height: 70px; position: relative; display: flex; justify-content: center; }
.wall { position: absolute; left: 0; top: 0; }
.dock { position: relative; width: 968px; height: 72px; background: #1e1e20; border: 1px solid #45454a; border-bottom: 0; border-radius: 10px 10px 0 0; display: flex; }
.d { width: 69px; flex: none; display: flex; flex-wrap: wrap; justify-content: center; align-content: flex-start; gap: 5px 3px; padding-top: 18px; }
.d svg { width: 32px; height: 32px; margin: 0 18px; }
.d s { width: 4px; height: 4px; background: #fff; }
.d.on { background: linear-gradient(#4e4e4e, #4e4e4e) 10px 10px / 49px 49px no-repeat; }
.ps { position: relative; }
.ps b { position: absolute; left: 26px; top: 24px; color: #fff; font: 700 11px/14px "Noto Sans", sans-serif; }
```
